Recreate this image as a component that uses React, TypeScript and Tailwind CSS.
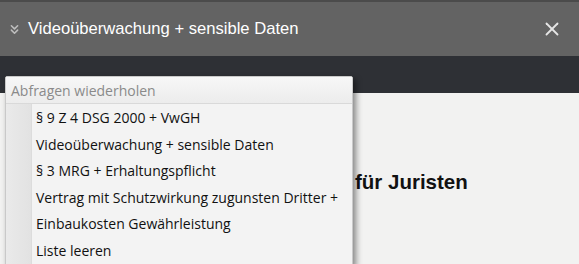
import { ChevronsDown, X } from "lucide-react";

const items = [
  "§ 9 Z 4 DSG 2000 + VwGH",
  "Videoüberwachung + sensible Daten",
  "§ 3 MRG + Erhaltungspflicht",
  "Vertrag mit Schutzwirkung zugunsten Dritter +",
  "Einbaukosten Gewährleistung",
  "Liste leeren",
];

export default function App() {
  return (
    <div className="relative h-[264px] w-[579px] overflow-hidden bg-[#f2f2f1]">
      {/* top bar */}
      <div className="border-t-2 border-[#4b4b4b] bg-[#636363]">
        <div className="flex h-[54px] items-center pr-[16px] pl-[7px]">
          <ChevronsDown className="h-[15px] w-[15px] text-[#bdbdbd]" strokeWidth={2.5} />
          <span className="ml-[6px] font-['Liberation_Sans',Arial,sans-serif] text-[16.6px] text-white">
            Videoüberwachung + sensible Daten
          </span>
          <X className="ml-auto h-[22px] w-[22px] text-[#e6e6e6]" strokeWidth={2} />
        </div>
      </div>
      <div className="h-[37px] bg-[#2e3035]" />

      {/* page content */}
      <div className="pt-[76px] pl-[355px]">
        <h2 className="font-['Liberation_Sans',Arial,sans-serif] text-[20.5px] leading-[26px] font-bold text-[#111]">
          für Juristen
        </h2>
      </div>

      {/* history dropdown */}
      <div className="absolute top-[76px] left-[5px] w-[348px] rounded-[2px] border border-[#c9c9c9] bg-[#f3f3f3] font-['Open_Sans',sans-serif] shadow-[3px_3px_6px_rgba(0,0,0,0.45)]">
        <div className="border-b border-[#d9d9d9] bg-gradient-to-b from-[#f7f7f7] to-[#ececec] pt-[3px] pb-[2px] pl-[5px] text-[14px] leading-[21px] text-[#8a8a8a]">
          Abfragen wiederholen
        </div>
        <div className="flex">
          <div className="w-[26px] shrink-0 border-r border-[#dcdcdc] bg-gradient-to-r from-[#eaeaea] to-[#e2e2e2]" />
          <ul className="flex-1 pt-[1px] pb-[1px]">
            {items.map((t) => (
              <li key={t} className="h-[26.5px] pl-[4px] text-[14px] leading-[26px] text-[#111]">
                {t}
              </li>
            ))}
          </ul>
        </div>
      </div>
    </div>
  );
}
